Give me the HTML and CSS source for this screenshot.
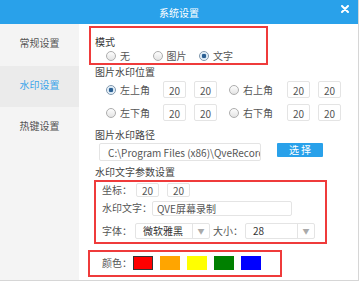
FILE: index.html
```html
<!DOCTYPE html>
<html lang="zh-CN">
<head>
  <meta charset="UTF-8" />
  <title>系统设置</title>
  <link rel="stylesheet" href="styles.css">
</head>
<body>
  <div class="window">
    <!-- Title bar -->
    <header class="titlebar">
      <span class="title">系统设置</span>
      <svg class="close" width="8" height="8" viewBox="0 0 8 8">
        <path d="M1 1L7 7M7 1L1 7" stroke="#fff" stroke-width="2" stroke-linecap="round"/>
      </svg>
    </header>

    <div class="main">
      <!-- Sidebar -->
      <nav class="sidebar">
        <div class="nav-item">常规设置</div>
        <div class="nav-item active">水印设置</div>
        <div class="nav-item">热键设置</div>
      </nav>

      <!-- Watermark settings -->
      <section class="panel">
        <div class="mark mode-box">
          <div class="label dark">模式</div>
          <div class="mode-row">
            <label class="radio"><span class="dot"></span>无</label>
            <label class="radio"><span class="dot"></span>图片</label>
            <label class="radio"><span class="dot on"></span>文字</label>
          </div>
        </div>

        <div class="label">图片水印位置</div>
        <div class="pos-row">
          <label class="radio corner"><span class="dot on"></span>左上角</label>
          <span class="num">20</span>
          <span class="num">20</span>
          <label class="radio corner right"><span class="dot"></span>右上角</label>
          <span class="num">20</span>
          <span class="num">20</span>
        </div>
        <div class="pos-row second">
          <label class="radio corner"><span class="dot"></span>左下角</label>
          <span class="num">20</span>
          <span class="num">20</span>
          <label class="radio corner right"><span class="dot"></span>右下角</label>
          <span class="num">20</span>
          <span class="num">20</span>
        </div>

        <div class="label path-title">图片水印路径</div>
        <div class="path-row">
          <div class="path-input">C:\Program Files (x86)\QveRecorder</div>
          <button class="btn">选 择</button>
        </div>

        <div class="label text-title">水印文字参数设置</div>
        <div class="mark text-box">
          <div class="field">
            <span class="key">坐标：</span>
            <span class="num small">20</span>
            <span class="num small">20</span>
          </div>
          <div class="field gap4">
            <span class="key">水印文字：</span>
            <span class="text-input">QVE屏幕录制</span>
          </div>
          <div class="field gap8">
            <span class="key">字体：</span>
            <span class="select font-select"><span class="val">微软雅黑</span><span class="arrow">▼</span></span>
            <span class="key size-key">大小：</span>
            <span class="select size-select"><span class="val">28</span><span class="arrow">▼</span></span>
          </div>
        </div>

        <div class="mark color-box">
          <span class="key">颜色：</span>
          <span class="swatch picked" style="background:#ff0000"></span>
          <span class="swatch" style="background:#ffa500"></span>
          <span class="swatch" style="background:#ffff00"></span>
          <span class="swatch" style="background:#008000"></span>
          <span class="swatch" style="background:#0000ff"></span>
        </div>
      </section>
    </div>
  </div>
</body>
</html>
```

FILE: styles.css
```css
body {
  margin: 0;
  background: #fff;
  font-family: "Noto Sans CJK SC", "Noto Sans", sans-serif;
  font-size: 10px;
  color: #555;
}

.window {
  width: 358px;
  height: 280px;
  border-right: 1px solid #d6d6d6;
  border-bottom: 1px solid #d6d6d6;
  overflow: hidden;
}

/* Title bar */
.titlebar {
  height: 24px;
  background: #29a1ea;
  color: #fff;
  display: flex;
  align-items: center;
  justify-content: center;
  position: relative;
}

.title {
  font-size: 10px;
  line-height: 14px;
  margin-top: 2px;
}

.close {
  position: absolute;
  right: 9px;
  top: 5px;
}

.main {
  display: flex;
  height: 256px;
}

/* Sidebar */
.sidebar {
  width: 79px;
  background: #f4f4f4;
}

.nav-item {
  height: 41px;
  line-height: 38px;
  text-align: center;
  color: #555;
}

.nav-item:first-child {
  height: 42px;
}

.nav-item.active {
  background: #ebebeb;
  color: #3ba5ea;
}

/* Panel */
.panel {
  flex: 1;
  padding-left: 16px;
}

.label {
  line-height: 14px;
  height: 14px;
  color: #444;
}

.label.dark {
  color: #333;
}

.mark {
  border: 2px solid #ef3b3b;
  box-sizing: border-box;
}

.mode-box {
  width: 179px;
  height: 39px;
  margin: 2px 0 0 -6px;
  padding: 7px 0 0 4px;
}

.mode-row {
  display: flex;
  padding-left: 11px;
  height: 14px;
}

.radio {
  display: flex;
  align-items: center;
  line-height: 14px;
  color: #555;
  width: 46.5px;
}

.dot {
  width: 10px;
  height: 10px;
  border: 1px solid #adadad;
  border-radius: 50%;
  background: linear-gradient(#fdfdfd, #e4e4e4);
  margin-right: 4px;
  box-sizing: border-box;
  flex: none;
}

.dot.on {
  border-color: #7f97ad;
  background: radial-gradient(circle, #2b5f92 0 2px, #cfe3f3 2.5px, #f3f8fc 4px);
}

.pos-row {
  display: flex;
  align-items: center;
  height: 17px;
  margin-top: 2px;
  padding-left: 11px;
}

.pos-row.second {
  margin-top: 6px;
}

.corner {
  width: 57px;
}

.corner.right {
  width: 58px;
  margin-left: 12px;
}

.num {
  width: 23px;
  height: 17px;
  line-height: 17px;
  border: 1px solid #e4e4e4;
  border-radius: 2px;
  box-sizing: border-box;
  text-align: center;
  color: #555;
}

.num + .num {
  margin-left: 8px;
}

.path-title {
  margin-top: 7px;
}

.path-row {
  display: flex;
  align-items: flex-start;
  margin-top: 1px;
  padding-left: 4px;
}

.path-input {
  width: 162px;
  height: 18px;
  line-height: 17px;
  border: 1px solid #e4e4e4;
  border-radius: 2px;
  box-sizing: border-box;
  padding-left: 8px;
  white-space: nowrap;
  overflow: hidden;
  color: #555;
}

.btn {
  margin-left: 16px;
  width: 46px;
  height: 14px;
  padding: 0;
  border: none;
  border-radius: 1px;
  background: #29a1ea;
  color: #fff;
  font-family: inherit;
  font-size: 10px;
  line-height: 14px;
}

.text-title {
  margin-top: 4px;
}

.text-box {
  width: 233px;
  margin: 1px 0 0 -1px;
  padding: 1px 0 3px 6px;
}

.field {
  display: flex;
  align-items: center;
  height: 14px;
}

.field.gap4 {
  margin-top: 4px;
}

.field.gap8 {
  margin-top: 8px;
  height: 16px;
}

.key {
  line-height: 14px;
  color: #555;
  white-space: nowrap;
}

.num.small {
  height: 14px;
  line-height: 14px;
}

.key + .num {
  margin-left: 4px;
}

.text-input {
  width: 140px;
  height: 15px;
  line-height: 14px;
  border: 1px solid #e4e4e4;
  border-radius: 2px;
  box-sizing: border-box;
  padding-left: 4px;
  color: #555;
}

.select {
  display: flex;
  height: 16px;
  border: 1px solid #e4e4e4;
  border-radius: 2px;
  box-sizing: border-box;
  margin-left: 3px;
}

.select .val {
  flex: 1;
  line-height: 14px;
  padding-left: 7px;
  color: #333;
}

.select .arrow {
  width: 16px;
  border-left: 1px solid #e4e4e4;
  color: #aaa;
  font-size: 7px;
  line-height: 14px;
  text-align: center;
}

.font-select {
  width: 75px;
}

.size-key {
  margin-left: 3px;
}

.size-select {
  width: 70px;
  margin-left: 2px;
}

.color-box {
  display: flex;
  align-items: center;
  width: 194px;
  height: 27px;
  margin: 6px 0 0 -7px;
  padding: 0 0 1px 12px;
}

.swatch {
  width: 20px;
  height: 14px;
  margin-left: 7px;
  box-sizing: border-box;
}

.key + .swatch {
  margin-left: 1px;
}

.swatch.picked {
  border: 1px solid #333;
}
```
